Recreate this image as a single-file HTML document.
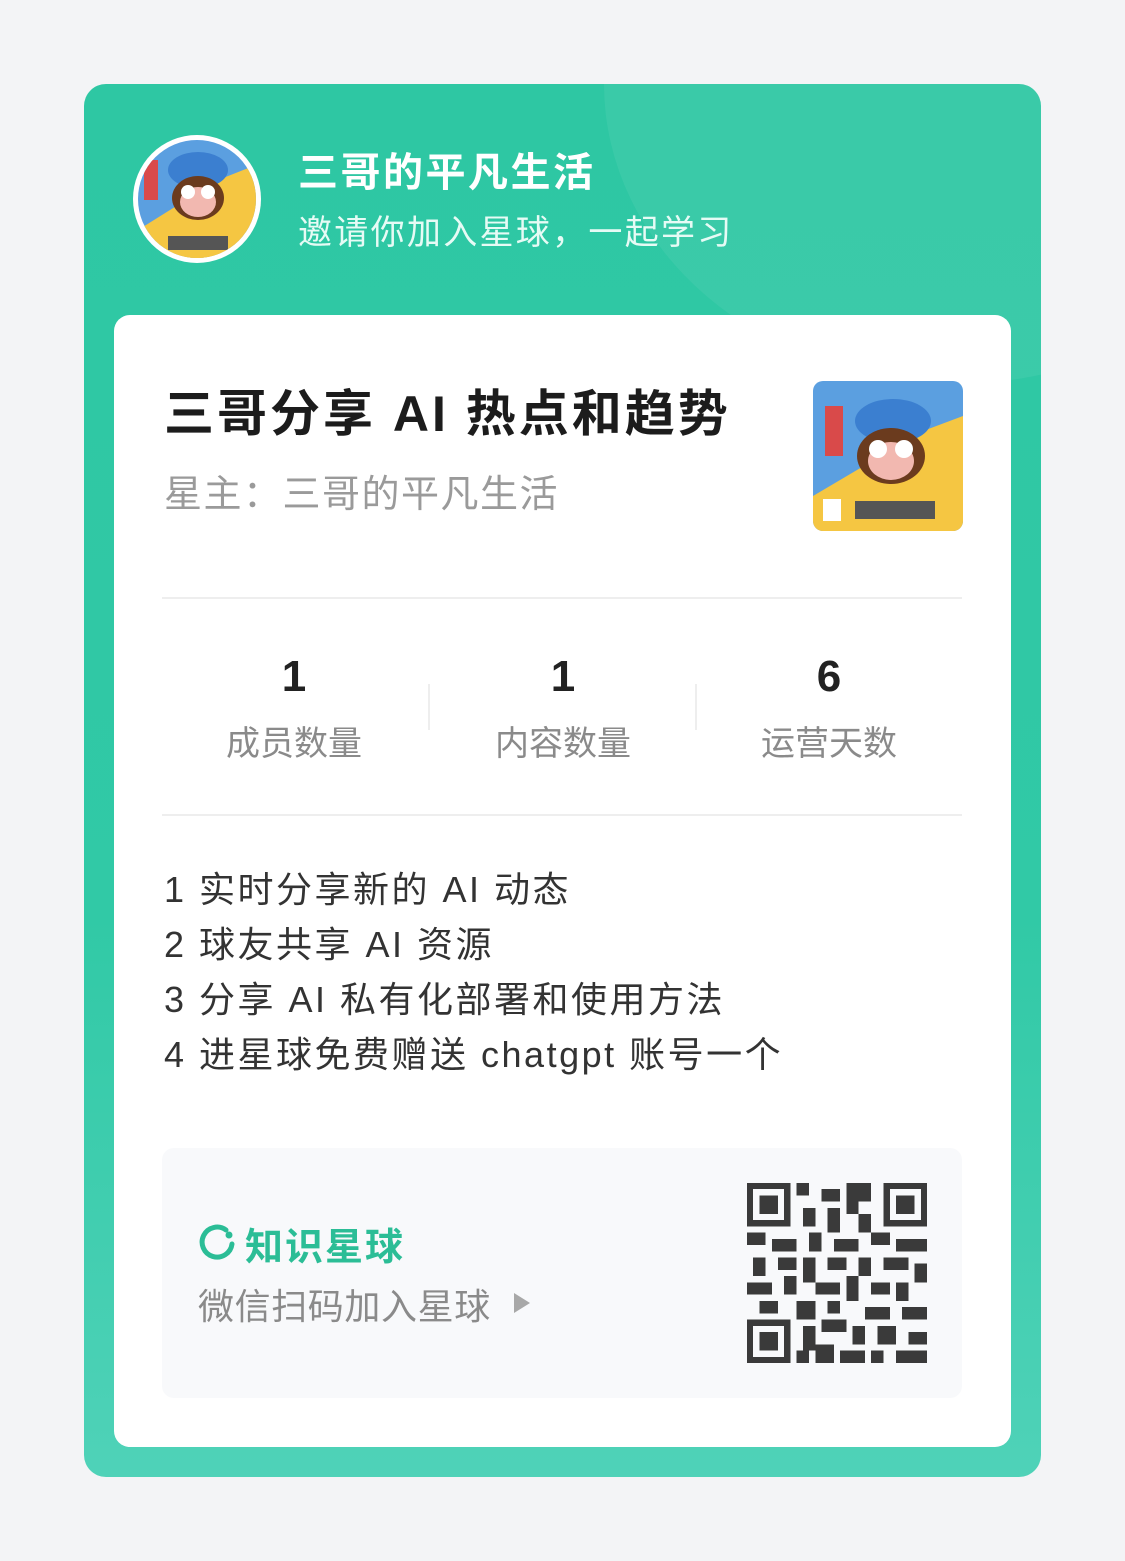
<!DOCTYPE html>
<html><head><meta charset="utf-8"><style>
*{margin:0;padding:0;box-sizing:border-box}
body{width:1125px;height:1561px;background:#f3f4f6;font-family:"Liberation Sans","Noto Sans CJK SC",sans-serif;position:relative;overflow:hidden}
.outer{position:absolute;left:84px;top:84px;width:957px;height:1393px;border-radius:22px;background:linear-gradient(180deg,#2ec7a3 0%,#31c9a6 60%,#4fd2b8 100%);overflow:hidden}
.glow{position:absolute;left:520px;top:-300px;width:700px;height:600px;border-radius:50%;background:rgba(255,255,255,.06)}
.av{position:absolute;left:133px;top:135px;width:128px;height:128px;border-radius:50%;background:#fff;padding:5px}
.t1{position:absolute;left:298px;top:140px;color:#fff;font-size:40px;font-weight:bold;letter-spacing:2.5px}
.t2{position:absolute;left:298px;top:205px;color:#e6fbf5;font-size:34px;letter-spacing:2.3px}
.inner{position:absolute;left:114px;top:315px;width:897px;height:1132px;border-radius:16px;background:#fff}
.title{position:absolute;left:164px;top:374px;font-size:50px;font-weight:bold;color:#1c1c1c;letter-spacing:3px}
.owner{position:absolute;left:164px;top:463px;font-size:38px;color:#9a9a9a;letter-spacing:1.5px}
.hr{position:absolute;left:162px;width:800px;height:2px;background:#eeeeee}
.num{position:absolute;top:652px;font-size:44px;font-weight:bold;color:#222;width:200px;text-align:center}
.lab{position:absolute;top:716px;font-size:34px;color:#8a8a8a;width:200px;text-align:center}
.vl{position:absolute;top:684px;width:2px;height:46px;background:#eee}
.desc{position:absolute;left:164px;top:862px;font-size:36px;color:#333;line-height:55px;letter-spacing:2.5px}
.qrbox{position:absolute;left:162px;top:1148px;width:800px;height:250px;border-radius:12px;background:#f8f9fb}
.zs{position:absolute;left:198px;top:1216px;font-size:38px;font-weight:bold;color:#2bbd96;letter-spacing:2px}
.wx{position:absolute;left:198px;top:1278px;font-size:36px;color:#8a8a8a;letter-spacing:0.6px}
</style></head><body>
<div class="outer"><div class="glow"></div></div>
<div class="av"><svg width="118" height="118" viewBox="0 0 118 118"><defs><clipPath id="c"><circle cx="59" cy="59" r="59"/></clipPath></defs><g clip-path="url(#c)"><rect width="118" height="118" fill="#5b9fe0"/><polygon points="80,40 118,25 118,118 0,118 0,90" fill="#f5c642"/><rect x="6" y="20" width="14" height="40" fill="#d94a4a"/><ellipse cx="60" cy="30" rx="30" ry="18" fill="#3b7fd0"/><ellipse cx="60" cy="58" rx="26" ry="22" fill="#6b3b1e"/><ellipse cx="60" cy="62" rx="18" ry="15" fill="#f2b8b0"/><circle cx="50" cy="52" r="7" fill="#fff"/><circle cx="70" cy="52" r="7" fill="#fff"/><rect x="28" y="80" width="62" height="38" fill="#f5c642"/><rect x="30" y="96" width="60" height="14" fill="#555"/></g></svg></div>
<div class="t1">三哥的平凡生活</div>
<div class="t2">邀请你加入星球，一起学习</div>
<div class="inner"></div>
<div class="title">三哥分享 AI 热点和趋势</div>
<div class="owner">星主：三哥的平凡生活</div>
<svg style="position:absolute;left:813px;top:381px" width="150" height="150" viewBox="0 0 150 150"><defs><clipPath id="d"><rect width="150" height="150" rx="10"/></clipPath></defs><g clip-path="url(#d)"><rect width="150" height="150" fill="#5b9fe0"/><polygon points="110,50 150,35 150,150 0,150 0,115" fill="#f5c642"/><rect x="12" y="25" width="18" height="50" fill="#d94a4a"/><ellipse cx="80" cy="40" rx="38" ry="22" fill="#3b7fd0"/><ellipse cx="78" cy="75" rx="34" ry="28" fill="#6b3b1e"/><ellipse cx="78" cy="80" rx="23" ry="19" fill="#f2b8b0"/><circle cx="65" cy="68" r="9" fill="#fff"/><circle cx="91" cy="68" r="9" fill="#fff"/><rect x="40" y="103" width="80" height="47" fill="#f5c642"/><rect x="42" y="120" width="80" height="18" fill="#555"/><rect x="10" y="118" width="18" height="22" fill="#fff"/></g></svg>
<div class="hr" style="top:597px"></div>
<div class="num" style="left:194px">1</div><div class="lab" style="left:194px">成员数量</div>
<div class="vl" style="left:428px"></div>
<div class="num" style="left:463px">1</div><div class="lab" style="left:463px">内容数量</div>
<div class="vl" style="left:695px"></div>
<div class="num" style="left:729px">6</div><div class="lab" style="left:729px">运营天数</div>
<div class="hr" style="top:814px"></div>
<div class="desc">1 实时分享新的 AI 动态<br>2 球友共享 AI 资源<br>3 分享 AI 私有化部署和使用方法<br>4 进星球免费赠送 chatgpt 账号一个</div>
<div class="qrbox"></div>
<svg style="position:absolute;left:198px;top:1222px" width="38" height="38" viewBox="0 0 38 38"><path d="M28 8 A15 15 0 1 0 34 22" fill="none" stroke="#2bbd96" stroke-width="5" stroke-linecap="round"/><circle cx="31" cy="13" r="3.5" fill="#2bbd96"/></svg>
<div class="zs" style="left:245px">知识星球</div>
<div class="wx">微信扫码加入星球</div>
<svg style="position:absolute;left:512px;top:1291px" width="20" height="24"><polygon points="2,2 18,12 2,22" fill="#a8a8a8"/></svg>
<svg style="position:absolute;left:747px;top:1183px" width="180" height="180" viewBox="0 0 29 29" shape-rendering="crispEdges" fill="#3a3a3a">
<path d="M0 0h7v7h-7zM1 1v5h5v-5zM2 2h3v3h-3z" fill-rule="evenodd"/>
<path d="M22 0h7v7h-7zM23 1v5h5v-5zM24 2h3v3h-3z" fill-rule="evenodd"/>
<path d="M0 22h7v7h-7zM1 23v5h5v-5zM2 24h3v3h-3z" fill-rule="evenodd"/>
<path d="M8 0h2v2h-2zM12 1h3v2h-3zM16 0h4v3h-2v2h-2zM9 4h2v3h-2zM13 4h2v4h-2zM18 5h2v3h-2zM0 8h3v2h-3zM4 9h4v2h-4zM10 8h2v3h-2zM14 9h4v2h-4zM20 8h3v2h-3zM24 9h5v2h-5zM1 12h2v3h-2zM5 12h3v2h-3zM9 12h2v4h-2zM13 12h3v2h-3zM18 12h2v3h-2zM22 12h4v2h-4zM27 13h2v3h-2zM0 16h4v2h-4zM6 15h2v3h-2zM11 16h4v2h-4zM16 15h2v4h-2zM20 16h3v2h-3zM24 16h2v3h-2zM2 19h3v2h-3zM8 19h3v3h-3zM13 19h2v2h-2zM19 20h4v2h-4zM25 20h4v2h-4zM9 23h2v4h-2zM12 22h4v2h-4zM17 23h2v3h-2zM21 23h3v3h-3zM26 24h3v2h-3zM11 26h3v3h-3zM15 27h4v2h-4zM20 27h2v2h-2zM24 27h5v2h-5zM8 27h2v2h-2z"/>
</svg>
</body></html>
